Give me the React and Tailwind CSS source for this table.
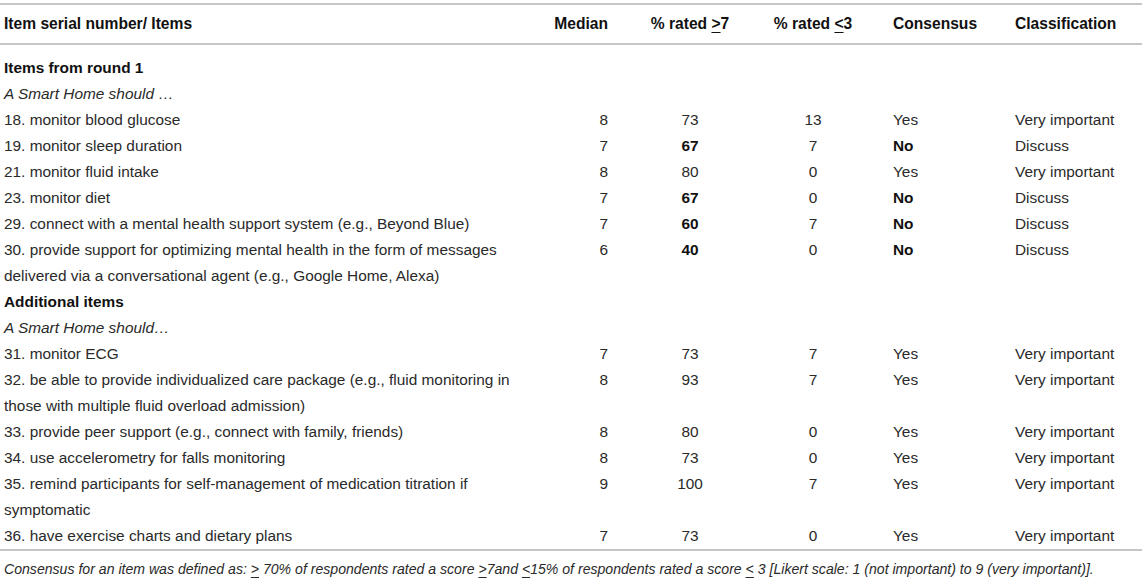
import React from 'react';

const roundOne = [
  { item: '18. monitor blood glucose', median: '8', hi: '73', lo: '13', consensus: 'Yes', cls: 'Very important' },
  { item: '19. monitor sleep duration', median: '7', hi: '67', lo: '7', consensus: 'No', cls: 'Discuss', flag: true },
  { item: '21. monitor fluid intake', median: '8', hi: '80', lo: '0', consensus: 'Yes', cls: 'Very important' },
  { item: '23. monitor diet', median: '7', hi: '67', lo: '0', consensus: 'No', cls: 'Discuss', flag: true },
  { item: '29. connect with a mental health support system (e.g., Beyond Blue)', median: '7', hi: '60', lo: '7', consensus: 'No', cls: 'Discuss', flag: true },
  {
    item: ['30. provide support for optimizing mental health in the form of messages', 'delivered via a conversational agent (e.g., Google Home, Alexa)'],
    median: '6', hi: '40', lo: '0', consensus: 'No', cls: 'Discuss', flag: true
  }
];

const additional = [
  { item: '31. monitor ECG', median: '7', hi: '73', lo: '7', consensus: 'Yes', cls: 'Very important' },
  {
    item: ['32. be able to provide individualized care package (e.g., fluid monitoring in', 'those with multiple fluid overload admission)'],
    median: '8', hi: '93', lo: '7', consensus: 'Yes', cls: 'Very important'
  },
  { item: '33. provide peer support (e.g., connect with family, friends)', median: '8', hi: '80', lo: '0', consensus: 'Yes', cls: 'Very important' },
  { item: '34. use accelerometry for falls monitoring', median: '8', hi: '73', lo: '0', consensus: 'Yes', cls: 'Very important' },
  {
    item: ['35. remind participants for self-management of medication titration if', 'symptomatic'],
    median: '9', hi: '100', lo: '7', consensus: 'Yes', cls: 'Very important'
  },
  { item: '36. have exercise charts and dietary plans', median: '7', hi: '73', lo: '0', consensus: 'Yes', cls: 'Very important' }
];

const Row = ({ row, last }) => {
  const border = last ? 'border-b-2 border-[#c6c6c6]' : '';
  return (
    <tr className={border}>
      <td className="pl-1 align-top">
        {Array.isArray(row.item) ? (
          <>
            {row.item[0]}
            <br />
            {row.item[1]}
          </>
        ) : (
          row.item
        )}
      </td>
      <td className="pr-1 text-right align-top">{row.median}</td>
      <td className={`text-center align-top ${row.flag ? 'font-bold text-[#111]' : ''}`}>{row.hi}</td>
      <td className="text-center align-top">{row.lo}</td>
      <td className={`pl-[35px] align-top ${row.flag ? 'font-bold text-[#111]' : ''}`}>{row.consensus}</td>
      <td className="pl-1 align-top">{row.cls}</td>
    </tr>
  );
};

const Ge = () => <span className="underline underline-offset-[3px] decoration-1">&gt;</span>;
const Le = () => <span className="underline underline-offset-[3px] decoration-1">&lt;</span>;

export default function App() {
  return (
    <div className="w-[1146px] h-[578px] bg-white pt-[3px] text-[15.4px] text-[#2a2a2a]" style={{ fontFamily: '"Liberation Sans", Arial, sans-serif' }}>
      <table className="w-[1142px] table-fixed border-collapse leading-[26px]">
        <colgroup>
          <col className="w-[520px]" />
          <col className="w-[92px]" />
          <col className="w-[156px]" />
          <col className="w-[90px]" />
          <col className="w-[153px]" />
          <col className="w-[131px]" />
        </colgroup>
        <thead>
          <tr className="border-y-2 border-[#c6c6c6] h-[40px] font-bold text-[#111] text-[15.6px]">
            <th className="pl-1 text-left font-bold">Item serial number/ Items</th>
            <th className="pr-1 text-right font-bold">Median</th>
            <th className="text-center font-bold">% rated <Ge />7</th>
            <th className="text-center font-bold">% rated <Le />3</th>
            <th className="pl-[35px] text-left font-bold">Consensus</th>
            <th className="pl-1 text-left font-bold">Classification</th>
          </tr>
        </thead>
        <tbody>
          <tr>
            <td colSpan={6} className="pl-1 pt-[10px] font-bold text-[#111]">Items from round 1</td>
          </tr>
          <tr>
            <td colSpan={6} className="pl-1 italic">A Smart Home should …</td>
          </tr>
          {roundOne.map((r, i) => (
            <Row key={i} row={r} />
          ))}
          <tr>
            <td colSpan={6} className="pl-1 font-bold text-[#111]">Additional items</td>
          </tr>
          <tr>
            <td colSpan={6} className="pl-1 italic">A Smart Home should…</td>
          </tr>
          {additional.map((r, i) => (
            <Row key={i} row={r} last={i === additional.length - 1} />
          ))}
        </tbody>
      </table>
      <p className="pl-1 pt-[5px] leading-[26px] italic text-[14.1px]">
        Consensus for an item was defined as: <Ge /> 70% of respondents rated a score <Ge />7and <Le />15% of respondents rated a score <Le /> 3 [Likert scale: 1 (not important) to 9 (very important)].
      </p>
    </div>
  );
}
